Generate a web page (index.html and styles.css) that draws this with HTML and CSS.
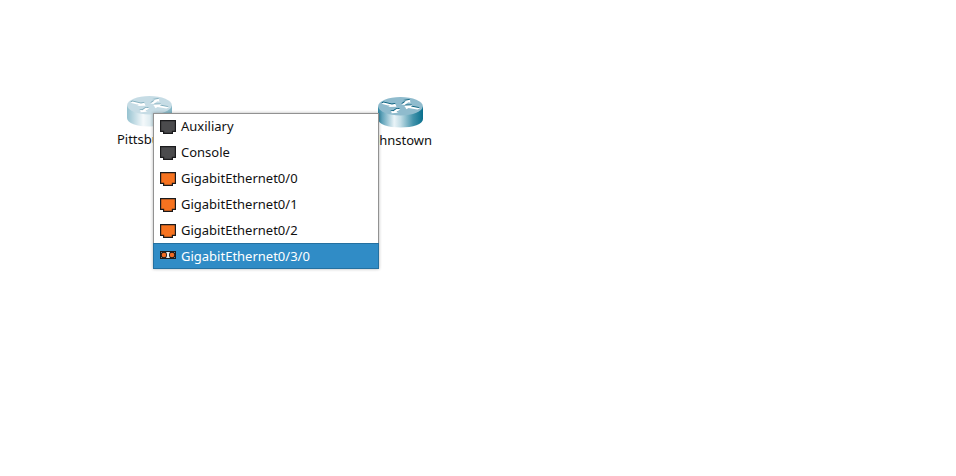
FILE: index.html
```
<!DOCTYPE html>
<html lang="en">
<head>
<meta charset="utf-8">
<title>Network topology</title>
<link rel="stylesheet" href="styles.css">
</head>
<body>
<svg class="defs" width="0" height="0" aria-hidden="true">
  <defs>
    <linearGradient id="side">
      <stop offset="0" stop-color="#2f87a2"/>
      <stop offset=".12" stop-color="#6eabc0"/>
      <stop offset=".36" stop-color="#eaf4f8"/>
      <stop offset=".5" stop-color="#c2dde6"/>
      <stop offset=".78" stop-color="#4393ab"/>
      <stop offset="1" stop-color="#086f8d"/>
    </linearGradient>
    <symbol id="router" viewBox="0 0 45 31">
      <path d="M0 9.500V22C0 27 10 30.500 22.500 30.500S45 27 45 22V9.500Z" fill="url(#side)"/>
      <ellipse cx="22.500" cy="9.300" rx="22.400" ry="9.200" fill="#8fbbcd"/>
      <g fill="#075f7d" transform="translate(-.3 -.9)">
        <path id="arrows" d="M3.500 6.800 5.500 5.500 14 7.500 17.500 6.800 18.500 9.800 10 10 12 9ZM23.500 7.500 27.500 4.500 25.500 4 32 2.800 32.500 5.800 30.500 5.300 26.500 8ZM42 11.200 39.500 12.500 30.500 11 28.500 12.200 26 8.500 34.500 8.300 33 9.500ZM22.300 12.200 18.500 15 20.500 15.800 13.500 16.300 13 13.800 15.300 14.200 18.800 11.800Z"/>
      </g>
      <use href="#arrows" fill="#fff"/>
    </symbol>
    <symbol id="port" viewBox="0 0 16 14">
      <path d="M.6.6H15.400V11.400H12.400V13.400H3.600V11.400H.6Z" stroke="#1b1b1d" stroke-width="1.200"/>
    </symbol>
    <symbol id="fiber" viewBox="0 0 16 8">
      <path fill="#1d1b1b" d="M0 0H16V8H0Z"/>
      <path fill="#777" d="M1 1h1v1H1zM1 6h1v1H1zM6 1h1v1H6zM6 6h1v1H6zM9 1h1v1H9zM9 6h1v1H9zM14 1h1v1h-1zM14 6h1v1h-1z"/>
      <circle cx="4" cy="4" r="2.300" fill="#f06a22"/>
      <circle cx="12" cy="4" r="2.300" fill="#f06a22"/>
      <path fill="#eee" d="M6.500 1H9.500V2.500H9V5.500H9.500V7H6.500V5.500H7V2.500H6.500Z"/>
    </symbol>
  </defs>
</svg>
<main class="canvas">
  <div class="node pittsburgh"><svg class="router faded"><use href="#router"/></svg><span>Pittsburgh</span></div>
  <div class="node johnstown"><svg class="router"><use href="#router"/></svg><span>Johnstown</span></div>
  <ul class="menu">
    <li><svg class="port dark"><use href="#port"/></svg>Auxiliary</li>
    <li><svg class="port dark"><use href="#port"/></svg>Console</li>
    <li><svg class="port"><use href="#port"/></svg>GigabitEthernet0/0</li>
    <li><svg class="port"><use href="#port"/></svg>GigabitEthernet0/1</li>
    <li><svg class="port"><use href="#port"/></svg>GigabitEthernet0/2</li>
    <li class="selected"><svg class="fiber"><use href="#fiber"/></svg>GigabitEthernet0/3/0</li>
  </ul>
</main>
</body>
</html>
```
FILE: styles.css
```
body {
  margin: 0;
  background: #fff;
  color: #111;
  font: 13px/18px "Noto Sans", sans-serif;
}

.defs {
  position: absolute;
}

.canvas {
  position: relative;
  height: 476px;
  overflow: hidden;
}

.node {
  position: absolute;
  display: flex;
  flex-direction: column;
  align-items: center;
  width: 89px;
  gap: 3px;
}

.pittsburgh {
  left: 105px;
  top: 96px;
}

.johnstown {
  left: 356px;
  top: 97px;
}

.router {
  width: 45px;
  height: 31px;
}

.node span {
  margin-left: -1px;
}

.faded {
  opacity: .5;
}

.menu {
  position: absolute;
  left: 153px;
  top: 113px;
  width: 226px;
  margin: 0;
  padding: 0;
  list-style: none;
  background: #fff;
  box-shadow: 0 0 3px rgba(0, 0, 0, .3);
}

.menu::after {
  content: "";
  position: absolute;
  inset: 0 0 26px;
  border: 1px solid #929292;
  border-bottom: 0;
}

.menu li {
  display: flex;
  align-items: center;
  box-sizing: border-box;
  height: 26px;
  padding-left: 7px;
  gap: 5px;
}

.menu .selected {
  background: #308cc6;
  border: 1px solid #2470a0;
  padding-left: 6px;
  color: #fff;
}

.port {
  width: 16px;
  height: 14px;
  margin-top: 2px;
  fill: #f67320;
}

.dark {
  fill: #4b4b4d;
}

.fiber {
  width: 16px;
  height: 8px;
  margin-bottom: 2px;
}
```
